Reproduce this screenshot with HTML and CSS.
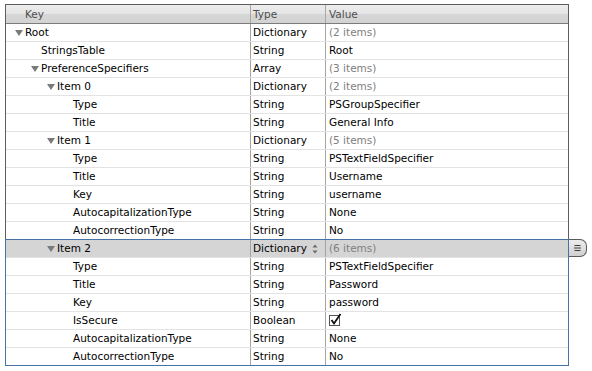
FILE: index.html
```html
<!DOCTYPE html>
<html lang="en">
<head>
  <meta charset="UTF-8"/>
  <title>Root.plist</title>
  <link rel="stylesheet" href="styles.css">
</head>
<body>
  <div class="plist">
    <div class="head">
      <div class="k">Key</div><div class="t">Type</div><div class="v">Value</div>
    </div>

    <div class="row"><div class="k l0"><span class="tw open"></span>Root</div><div class="t">Dictionary</div><div class="v dim">(2 items)</div></div>
    <div class="row"><div class="k l1"><span class="tw"></span>StringsTable</div><div class="t">String</div><div class="v">Root</div></div>
    <div class="row"><div class="k l1"><span class="tw open"></span>PreferenceSpecifiers</div><div class="t">Array</div><div class="v dim">(3 items)</div></div>
    <div class="row"><div class="k l2"><span class="tw open"></span>Item 0</div><div class="t">Dictionary</div><div class="v dim">(2 items)</div></div>
    <div class="row"><div class="k l3"><span class="tw"></span>Type</div><div class="t">String</div><div class="v">PSGroupSpecifier</div></div>
    <div class="row"><div class="k l3"><span class="tw"></span>Title</div><div class="t">String</div><div class="v">General Info</div></div>
    <div class="row"><div class="k l2"><span class="tw open"></span>Item 1</div><div class="t">Dictionary</div><div class="v dim">(5 items)</div></div>
    <div class="row"><div class="k l3"><span class="tw"></span>Type</div><div class="t">String</div><div class="v">PSTextFieldSpecifier</div></div>
    <div class="row"><div class="k l3"><span class="tw"></span>Title</div><div class="t">String</div><div class="v">Username</div></div>
    <div class="row"><div class="k l3"><span class="tw"></span>Key</div><div class="t">String</div><div class="v">username</div></div>
    <div class="row"><div class="k l3"><span class="tw"></span>AutocapitalizationType</div><div class="t">String</div><div class="v">None</div></div>
    <div class="row"><div class="k l3"><span class="tw"></span>AutocorrectionType</div><div class="t">String</div><div class="v">No</div></div>

    <div class="grp">
      <div class="row sel">
        <div class="k l2"><span class="tw open"></span>Item 2</div>
        <div class="t step">Dictionary
          <svg width="6" height="10" viewBox="0 0 6 10"><path d="M3 0.5 L5.5 3.5 L0.5 3.5 Z M0.5 6.5 L5.5 6.5 L3 9.5 Z" fill="#6a6a6a"/></svg>
        </div>
        <div class="v dim">(6 items)</div>
        <div class="pop">
          <svg width="9" height="8" viewBox="0 0 9 8"><path d="M1.5 1.5 H7.5 M1 4 H8 M1.5 6.5 H7.5" stroke="#3c3c3c" stroke-width="1.2"/></svg>
        </div>
      </div>
      <div class="row"><div class="k l3"><span class="tw"></span>Type</div><div class="t">String</div><div class="v">PSTextFieldSpecifier</div></div>
      <div class="row"><div class="k l3"><span class="tw"></span>Title</div><div class="t">String</div><div class="v">Password</div></div>
      <div class="row"><div class="k l3"><span class="tw"></span>Key</div><div class="t">String</div><div class="v">password</div></div>
      <div class="row"><div class="k l3"><span class="tw"></span>IsSecure</div><div class="t">Boolean</div>
        <div class="v">
          <svg class="check" width="14" height="14" viewBox="0 0 14 14">
            <rect x="0.5" y="2.5" width="10" height="10" fill="#fff" stroke="#555"/>
            <path d="M2.5 7 L5 10.5 L11.5 1" fill="none" stroke="#111" stroke-width="1.8"/>
          </svg>
        </div>
      </div>
      <div class="row"><div class="k l3"><span class="tw"></span>AutocapitalizationType</div><div class="t">String</div><div class="v">None</div></div>
      <div class="row last"><div class="k l3"><span class="tw"></span>AutocorrectionType</div><div class="t">String</div><div class="v">No</div></div>
    </div>
  </div>
</body>
</html>
```

FILE: styles.css
```css
body {
  margin: 0;
  background: #fff;
  color: #000;
  font-family: "DejaVu Sans", "Liberation Sans", sans-serif;
  font-size: 10.5px;
}
.plist {
  margin: 4px 0 0 5px;
  width: 562px;
  border: 1px solid #5e5e5e;
}
.head, .row {
  display: grid;
  grid-template-columns: 245px 75px 1fr;
}
.head {
  height: 18px;
  line-height: 18px;
  border-bottom: 1px solid #7c7c7c;
  background: linear-gradient(#ededed, #e4e4e4 50%, #d7d7d7 50%, #d2d2d2);
  color: #4e4e4e;
}
.head > div { border-right: 1px solid #a8a8a8; }
.head > div:last-child { border-right: 0; }
.head .k { padding-left: 19px; }

.row {
  height: 17px;
  line-height: 17px;
  border-bottom: 1px solid #e3e3e3;
  position: relative;
}
.row.last { border-bottom: 0; }
.row > div {
  white-space: nowrap;
  overflow: hidden;
}
.row .k, .row .t { border-right: 1px solid #a4a4a4; }
.t { padding-left: 2px; }
.v { padding-left: 3px; }
.dim { color: #808080; }

.k.l0 { padding-left: 9px; }
.k.l1 { padding-left: 25px; }
.k.l2 { padding-left: 41px; }
.k.l3 { padding-left: 57px; }

.tw {
  display: inline-block;
  width: 10px;
  height: 6px;
  vertical-align: 0;
}
.tw.open::before {
  content: "";
  display: block;
  width: 0;
  border-left: 4px solid transparent;
  border-right: 4px solid transparent;
  border-top: 6px solid #7a7a7a;
}

.sel { background: #d5d5d5; }
.step {
  display: flex;
  align-items: center;
  justify-content: space-between;
  padding-right: 7px;
}
.row > .pop {
  position: absolute;
  left: 100%;
  top: -1px;
  margin-left: 1px;
  width: 17px;
  height: 16px;
  border: 1px solid #5a5a5a;
  border-left: 0;
  border-radius: 0 7px 7px 0;
  background: linear-gradient(#ececec, #d0d0d0);
  display: flex;
  align-items: center;
  justify-content: center;
  overflow: visible;
}

.grp { position: relative; }
.grp::after {
  content: "";
  position: absolute;
  top: -1px;
  left: -1px;
  right: -1px;
  bottom: -1px;
  border: 1px solid #4672a6;
  pointer-events: none;
}

.check { vertical-align: -3px; }
```
